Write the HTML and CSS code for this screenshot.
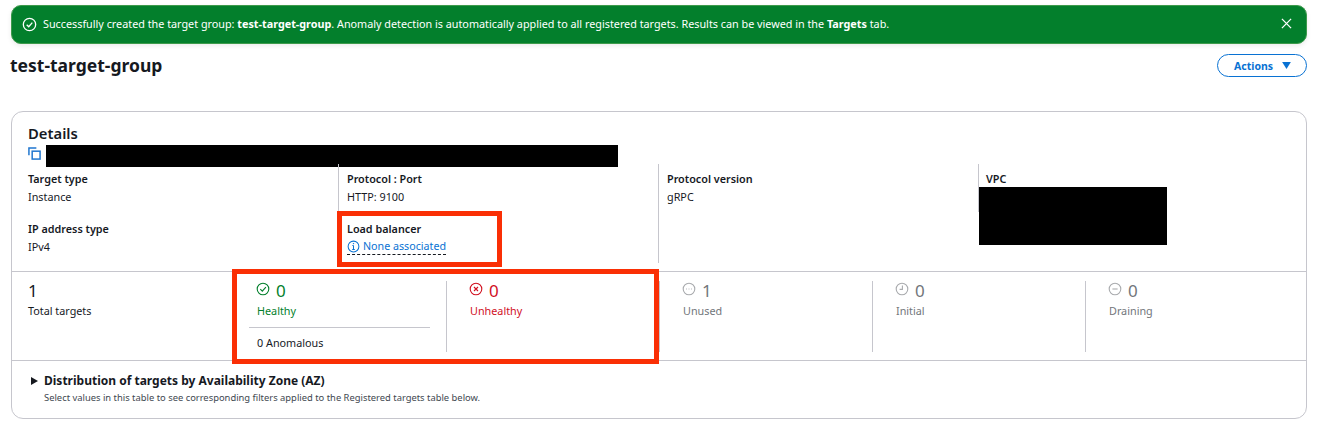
FILE: index.html
```html
<!DOCTYPE html>
<html lang="en">
<head>
	<meta charset="UTF-8">
	<title>test-target-group</title>
	<link rel="stylesheet" href="styles.css">
</head>
<body>
<div class="page">
	<div class="flash">
		<svg class="flash_icon" viewBox="0 0 16 16"><circle cx="8" cy="8" r="6.6"/><path d="M5 8.2l2.2 2.2L11 6"/></svg>
		<span class="flash_text">Successfully created the target group: <b>test-target-group</b>. Anomaly detection is automatically applied to all registered targets. Results can be viewed in the <b>Targets</b> tab.</span>
		<svg class="flash_close" viewBox="0 0 12 12"><path d="M1 1l10 10M11 1L1 11"/></svg>
	</div>

	<div class="head">
		<h1>test-target-group</h1>
		<button class="btn">Actions <svg viewBox="0 0 10 8"><path d="M0 0h10L5 8z"/></svg></button>
	</div>

	<div class="card">
		<div class="card_top">
			<h2>Details</h2>
			<div class="arn">
				<svg class="copy" viewBox="0 0 14 14"><path d="M1 9V1h8"/><rect x="4.5" y="4.5" width="8.5" height="8.5"/></svg>
				<div class="black arn_bar"></div>
			</div>
		</div>

		<div class="info">
			<div class="info_col">
				<div class="kv"><label>Target type</label><p>Instance</p></div>
				<div class="kv"><label>IP address type</label><p>IPv4</p></div>
			</div>
			<div class="info_col">
				<div class="kv"><label>Protocol : Port</label><p>HTTP: 9100</p></div>
				<div class="kv"><label>Load balancer</label>
					<p class="lb"><svg viewBox="0 0 14 14"><circle cx="7" cy="7" r="5.8"/><path d="M7 6v4.2M5.6 10.3h2.8M5.8 6h1.2"/><circle class="dot" cx="7" cy="3.9" r=".8"/></svg><a>None associated</a></p>
				</div>
			</div>
			<div class="info_col">
				<div class="kv"><label>Protocol version</label><p>gRPC</p></div>
			</div>
			<div class="info_col">
				<div class="kv"><label>VPC</label></div>
			</div>
		</div>

		<div class="stats">
			<div class="stat stat_first">
				<div class="num"><span>1</span></div>
				<div class="name">Total targets</div>
			</div>
			<div class="stat stat_healthy">
				<div class="num green"><svg viewBox="0 0 14 14"><circle cx="7" cy="7" r="5.8"/><path d="M4.3 7.2l2 2 3.6-4"/></svg><span>0</span></div>
				<div class="name green">Healthy</div>
				<div class="anom">0 Anomalous</div>
			</div>
			<div class="stat">
				<div class="num red"><svg viewBox="0 0 14 14"><circle cx="7" cy="7" r="5.8"/><path d="M5 5l4 4M9 5L5 9"/></svg><span>0</span></div>
				<div class="name red">Unhealthy</div>
			</div>
			<div class="stat">
				<div class="num grey"><svg viewBox="0 0 14 14"><circle cx="7" cy="7" r="5.8"/><path d="M4.2 7h.8M6.6 7h.8M9 7h.8"/></svg><span>1</span></div>
				<div class="name grey">Unused</div>
			</div>
			<div class="stat">
				<div class="num grey"><svg viewBox="0 0 14 14"><circle cx="7" cy="7" r="5.8"/><path d="M7.4 3.6v3.8H4.6"/></svg><span>0</span></div>
				<div class="name grey">Initial</div>
			</div>
			<div class="stat">
				<div class="num grey"><svg viewBox="0 0 14 14"><circle cx="7" cy="7" r="5.8"/><path d="M4.4 7h5.2"/></svg><span>0</span></div>
				<div class="name grey">Draining</div>
			</div>
		</div>

		<div class="dist">
			<h3><i class="arrow"></i>Distribution of targets by Availability Zone (AZ)</h3>
			<p>Select values in this table to see corresponding filters applied to the Registered targets table below.</p>
		</div>
	</div>

	<!-- redaction and annotation boxes painted over the screenshot -->
	<div class="black vpc_bar"></div>
	<div class="mark mark_lb"></div>
	<div class="mark mark_stats"></div>
</div>
</body>
</html>
```

FILE: styles.css
```css
* {box-sizing: border-box;}
body,h1,h2,h3,p {margin:0; padding:0;}
body {font:11px/16px "Noto Sans", "Open Sans", Arial, sans-serif; color:#16191f; background:#fff;}
.page {position:relative; width:1317px; height:434px; padding:5px 10px 0 11px; overflow:hidden;}
svg {fill:none; stroke:currentColor; flex:none;}

.flash {display:flex; align-items:center; height:39px; padding:0 14px 2px 10px; background:#037f2c; border:1px solid #3d9a4b; border-radius:10px; color:#fff; box-shadow:0 2px 5px rgba(0,0,0,.08);}
.flash_icon {width:15px; height:15px; stroke-width:1.4; margin-right:6px; margin-top:2px;}
.flash_text {flex:1; font-size:10.8px; margin-top:1px;}
.flash_close {width:11px; height:11px; stroke-width:1.4;}

.head {display:flex; justify-content:space-between; align-items:flex-start; height:67px; padding-top:10px;}
h1 {font-size:17.5px; line-height:22px; font-weight:700; color:#16191f; margin-left:-1px;}
.btn {display:flex; align-items:center; gap:9px; width:90px; height:23px; padding:0 0 0 16px; border:1px solid #0972d3; border-radius:12px; background:#fff; color:#0972d3; font:700 10.5px "Noto Sans", Arial, sans-serif;}
.btn svg {width:9px; height:7px; fill:#0972d3; stroke:none;}

.card {height:308px; border:1px solid #c6c6cd; border-radius:12px;}
.card_top {height:52px; padding:11px 0 0 16px;}
h2 {font-size:14.8px; line-height:20px; margin-bottom:2px; font-weight:600;}
.arn {display:flex; align-items:flex-start; gap:5px; height:22px;}
.copy {width:13px; height:13px; margin-top:2px; color:#1f76cf; stroke-width:1.6;}
.black {background:#000;}
.arn_bar {width:572px; height:22px;}

.info {display:grid; grid-template-columns:310px 320px 320px 320px; height:99px; padding-left:16px;}
.info_col {display:flex; flex-direction:column; gap:15px; padding-top:7px; padding-left:8px; border-left:1px solid #c6c6cd;}
.info_col:first-child {padding-left:0; border-left:0;}
.info_col:last-child {height:48px; padding-left:7px;}
.kv label {display:block; font-size:10.8px; font-weight:600; line-height:16px;}
.kv p {margin-top:1px; line-height:18px; color:#16191f; font-size:10.8px;}
.kv .lb {display:flex; align-items:center; gap:3px; width:99px; height:18px; margin-top:0; padding-top:1px; border-bottom:1px dashed #16191f; line-height:16px; white-space:nowrap;}
.lb svg {width:13px; height:13px; color:#0972d3; stroke-width:1.1;}
.lb .dot {fill:#0972d3; stroke:none;}
.lb a {color:#0972d3; font-size:10.7px;}

.stats {display:grid; grid-template-columns:221px 213px 213px 213px 213px 221px; height:90px; margin-top:8px; padding-top:9px; border-top:1px solid #c6c6cd; border-bottom:1px solid #c6c6cd;}
.stat {height:71px; padding-left:23px; border-left:1px solid #c6c6cd;}
.stat_first {padding-left:16px; border-left:0;}
.stat_healthy {border-left:0; padding-left:24px;}
.num {display:flex; align-items:center; gap:6px; height:22px; margin-top:-1px; margin-left:-1px; font-size:17px; line-height:22px;}
.stat_first .num {margin-left:0;}
.num svg {width:14px; height:14px; margin-top:-4px; stroke-width:1.1;}
.name {margin-top:1px; font-size:10.8px;}
.green {color:#037f2c;}
.red {color:#d1101f;}
.grey {color:#72767b;}
.grey svg {color:#a9abae;}
.anom {width:181px; margin:8px 0 0 -8px; padding:7px 0 0 8px; border-top:1px solid #c6c6cd; font-size:10.8px;}

.dist {padding:11px 0 0 32px;}
h3 {position:relative; font-size:12px; line-height:18px; font-weight:700;}
.arrow {position:absolute; left:-13px; top:5px; border-left:7px solid #16191f; border-top:4px solid transparent; border-bottom:4px solid transparent;}
.dist p {font-size:9.4px; line-height:14px; color:#414750; margin-top:1px;}

.vpc_bar {position:absolute; left:979px; top:187px; width:188px; height:58px;}
.mark {position:absolute; border:5px solid #fa2f05;}
.mark_lb {left:337px; top:211px; width:165px; height:56px;}
.mark_stats {left:232px; top:269px; width:427px; height:95px;}
```
